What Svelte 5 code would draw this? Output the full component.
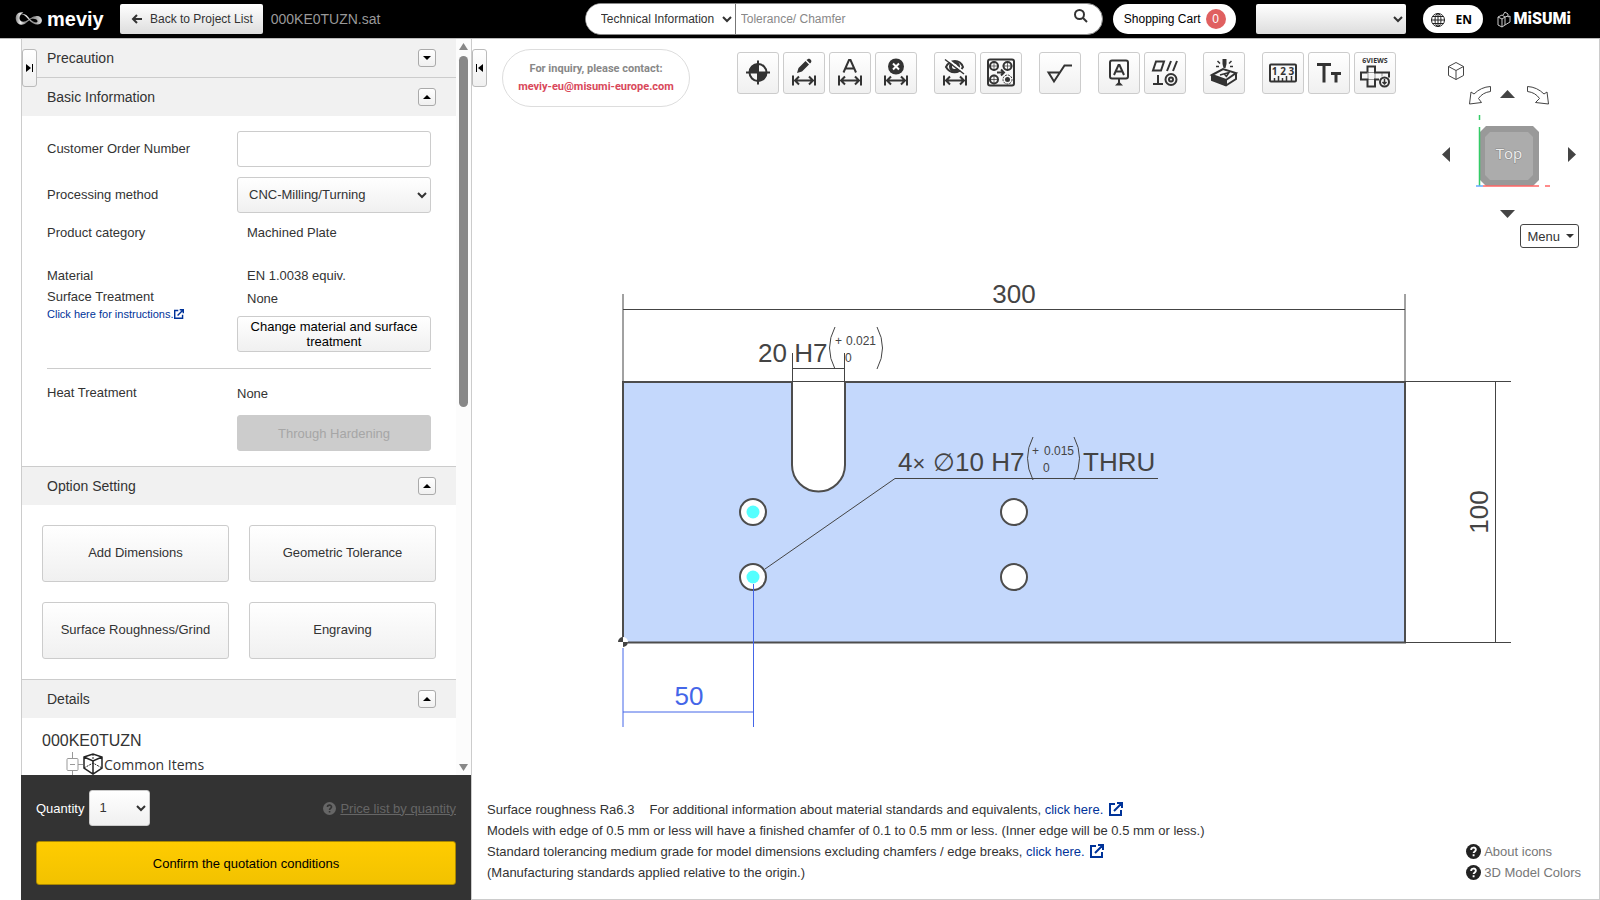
<script lang="ts">
  type Tool = { label: string; body: string };

  const dimArrow =
    '<path d="M10 23.5v10M32 23.5v10M12 28.5h18M16 24.5l-4 4 4 4M26 24.5l4 4-4 4" />';

  const toolGroups: Tool[][] = [
    [
      {
        label: 'Set origin',
        body: '<circle cx="21" cy="20.5" r="8.5"/><path d="M21 8.5v24M9 20.5h24"/><path class="fill" d="M21 20.5v-9a9 9 0 0 0-9 9zM21 20.5v9a9 9 0 0 0 9-9z"/>'
      },
      {
        label: 'Edit dimension',
        body: `<path class="fill" d="M14 21l1.5-5 7-7 3.5 3.5-7 7zM23.5 8l1.5-1c1.5-1 4.5 1.5 3 3.5l-1 1z"/>${dimArrow}`
      },
      { label: 'Automatic dimension', body: `<path d="M14.5 20.5L20 8h1.5L27 20.5M16.5 16.5h8.5"/>${dimArrow}` },
      {
        label: 'Delete dimension',
        body: `<circle class="fill" cx="21" cy="14.5" r="8"/><path class="cut" d="M18 11.5l6 6M24 11.5l-6 6"/>${dimArrow}`
      }
    ],
    [
      {
        label: 'Hide dimension',
        body: `<path d="M12 15c4-8 14-8 17 0-4 7-13 7-17 0z"/><circle cx="20.5" cy="14.5" r="4" stroke-width="3"/><path class="cut" d="M12 6l19 15"/><path stroke-width="1.5" d="M11 7.5L30 22"/>${dimArrow}`
      },
      {
        label: 'Group holes',
        body: '<rect x="8" y="7.5" width="26" height="26" rx="2"/><g stroke-width="2"><circle cx="14" cy="14" r="4"/><circle cx="27.5" cy="14" r="4"/><circle cx="14" cy="27.5" r="4"/></g><path stroke-width="0.7" d="M14 9v10M9 14h10M27.5 9v10M22.5 14h10M14 22.5v10M9 27.5h10"/><circle cx="27.5" cy="27.5" r="4.5" stroke-width="1" stroke-dasharray="2 1"/><circle class="fill" cx="27.5" cy="27.5" r="2.5"/><path d="M17 20.5h7M21 17.5l3 3-3 3"/>'
      }
    ],
    [{ label: 'Surface roughness', body: '<path d="M20.5 20.5H9.5L15 29.5 25.5 13.5H33"/>' }],
    [
      {
        label: 'Datum',
        body: '<rect x="12" y="8.5" width="18" height="18" rx="2"/><path d="M16 23l4.5-10h1L26 23M17.5 19.5h7M21 27v5"/><path class="fill" d="M17 33.5l4-4 4 4z"/>'
      },
      {
        label: 'Geometric tolerance',
        body: '<path d="M12 9.5h8l-3 9H9zM27 9l-4 10M33 9l-4 10M14 23v9M9 32h10"/><circle cx="27" cy="27.5" r="5.5"/><circle cx="27" cy="27.5" r="2"/>'
      }
    ],
    [
      {
        label: 'Engraving',
        body: '<path class="fill" d="M19.5 7h4v5l-1 4h-2l-1-4z"/><path stroke-width="1.5" d="M14.5 9l2.5 2.5M13 14.5h3M28.5 9l-2.5 2.5M30 14.5h-3"/><path d="M9 23l11-6 13 4-10 7zM9 23v5l14 5.5 10-6.500v-6M23 28v5"/><path class="fill" d="M9 23l14 5v6L9 28z"/><path stroke-width="1.5" d="M17 23l9-2.5-3 4.5M21 21.5l2 2.5"/>'
      }
    ],
    [
      {
        label: 'Measure',
        body: '<rect x="8" y="12.5" width="26" height="17" rx="1"/><text x="21" y="23" font-size="10" text-anchor="middle">1 2 3</text><path stroke-width="1.5" d="M12.5 29v-3M16.5 29v-5M20.5 29v-3M24.5 29v-5M29.5 29v-5"/>'
      },
      { label: 'Text size', body: '<path stroke-width="3" d="M9 12.5h14M16 12.5v18M23 21.5h10M28 21.5v9"/>' },
      {
        label: 'Six views',
        body: '<text x="21" y="11" font-size="7" text-anchor="middle">6VIEWS</text><path d="M13.5 20.5v-6h7.5v6h14v5M13.5 20.5H7v7h6.5v7h7.5v-7h4"/><path stroke-width="0.5" d="M14 20.5h7M14 27.5h7M14 20.5v7M21 20.5v7M28 20.5v4"/><circle cx="30.5" cy="30" r="4.5"/><path stroke-width="1.5" d="M30.5 27v5M28.5 30l2 2 2-2"/>'
      }
    ]
  ];

  const options = ['Add Dimensions', 'Geometric Tolerance', 'Surface Roughness/Grind', 'Engraving'];
  const holes = [
    { x: 753, y: 512, marked: true },
    { x: 753, y: 577, marked: true },
    { x: 1014, y: 512, marked: false },
    { x: 1014, y: 577, marked: false }
  ];

  let open = $state({ precaution: false, basic: true, option: true, details: true });
  let orderNumber = $state('');
  let keyword = $state('');
  let quantity = $state('1');
</script>

{#snippet external()}
  <svg class="external" viewBox="0 0 14 14" aria-hidden="true">
    <path d="M6 2H1v11h11V8M8 1h5v5M13 1L5 9" />
  </svg>
{/snippet}

{#snippet question()}
  <svg class="question" viewBox="0 0 16 16" aria-hidden="true">
    <circle cx="8" cy="8" r="8" />
    <path d="M5.5 6.3c0-3.3 5-3.3 5-.2 0 1.8-2.4 1.8-2.4 3.6M8.1 11v2" />
  </svg>
{/snippet}

{#snippet heading(title: string, key: 'precaution' | 'basic' | 'option' | 'details')}
  <div class="section-head">
    <h2>{title}</h2>
    <button class="toggle" aria-label="Toggle {title}" onclick={() => (open[key] = !open[key])}>
      <svg viewBox="0 0 8 4" width="8" height="4">
        <path d={open[key] ? 'M0 4L4 0l4 4z' : 'M0 0l4 4 4-4z'} />
      </svg>
    </button>
  </div>
{/snippet}

<div class="app">
  <header>
    <a class="logo" href="#home">
      <svg viewBox="0 0 30 16" width="28" height="16" aria-hidden="true">
        <defs>
          <linearGradient id="ribbon">
            <stop offset="0" stop-color="#888" />
            <stop offset="0.3" stop-color="#eee" />
            <stop offset="0.6" stop-color="#888" />
            <stop offset="1" stop-color="#ddd" />
          </linearGradient>
        </defs>
        <g fill="url(#ribbon)">
          <path d="M9 1C3 0 0 4 1 9c1 5 7 7 11 3l6-5c-3 1-6 4-9 4-5 0-6-7 0-10z" />
          <path d="M5 3c5-1 7 3 10 6 3 4 9 6 12 4 4-3 1-9-5-8-3 0-5 2-6 3 4-1 9 0 8 3-1 2-5 0-8-3-3-4-6-7-11-5z" />
        </g>
      </svg>
      <span>meviy</span>
    </a>
    <button class="back">
      <svg viewBox="0 0 11 10" width="11" height="10"><path d="M11 5H2M6 1L2 5l4 4" /></svg>
      Back to Project List
    </button>
    <span class="file">000KE0TUZN.sat</span>

    <form class="search" role="search">
      <select aria-label="Search category">
        <option>Technical Information</option>
      </select>
      <input type="text" aria-label="Keyword" placeholder="Tolerance/ Chamfer" bind:value={keyword} />
      <button type="button" aria-label="Search">
        <svg viewBox="0 0 14 14" width="14" height="14"><circle cx="5.5" cy="5.5" r="4.5" /><path d="M9 9l4 4" /></svg>
      </button>
    </form>
    <button class="cart">Shopping Cart <span>0</span></button>
    <select class="account" aria-label="Account"><option></option></select>
    <button class="lang">
      <svg viewBox="0 0 14 14" width="14" height="14">
        <circle cx="7" cy="7" r="6.5" /><ellipse cx="7" cy="7" rx="3" ry="6.5" />
        <path d="M7 0v14M0 7h14M1.5 3.5h11M1.5 10.5h11" />
      </svg>
      EN
    </button>
    <a class="misumi" href="#misumi">
      <svg viewBox="0 0 14 17" width="14" height="17" aria-hidden="true">
        <path d="M1 6l4-2 3 2v8l-3 2-4-2zM1 6l4 2 3-2M5 8v8M6 4l2-3 3 2v3l2-1v6l-5 3M8 6l3-1" />
      </svg>
      <span>MiSUMi</span>
    </a>
  </header>

  <div class="workspace">
    <aside>
      <button class="tab" aria-label="Expand panel">
        <svg viewBox="0 0 8 8" width="8" height="8"><path d="M0 0l5 4-5 4zM6 0h1v8H6z" /></svg>
      </button>

      <div class="scroll-area">
        <div class="sections">
          {@render heading('Precaution', 'precaution')}

          {@render heading('Basic Information', 'basic')}
          {#if open.basic}
            <div class="basic">
              <div class="row">
                <label for="order">Customer Order Number</label>
                <input id="order" type="text" bind:value={orderNumber} />
              </div>
              <div class="row">
                <label for="method">Processing method</label>
                <select id="method"><option>CNC-Milling/Turning</option></select>
              </div>
              <div class="row category">
                <span class="name">Product category</span>
                <span class="indent">Machined Plate</span>
              </div>
              <div class="row block">
                <div class="name">
                  <p>Material</p>
                  <p>Surface Treatment</p>
                  <a href="#instructions">Click here for instructions.{@render external()}</a>
                </div>
                <div class="value">
                  <p class="indent">EN 1.0038 equiv.</p>
                  <p class="indent">None</p>
                  <button class="change">Change material and surface treatment</button>
                </div>
              </div>
              <hr />
              <div class="row heat">
                <div class="name"><p>Heat Treatment</p></div>
                <div class="value">
                  <p>None</p>
                  <button disabled>Through Hardening</button>
                </div>
              </div>
            </div>
          {/if}

          {@render heading('Option Setting', 'option')}
          {#if open.option}
            <div class="options">
              {#each options as option}
                <button>{option}</button>
              {/each}
            </div>
          {/if}

          {@render heading('Details', 'details')}
          {#if open.details}
            <div class="details">
              <p>000KE0TUZN</p>
              <div class="tree-item">
                <svg viewBox="0 0 37 26" width="37" height="26" aria-hidden="true">
                  <g stroke="#999"><path d="M6.5 0v6M6.5 18v8M12 12.5h5M4 12.5h5" /><rect x="1" y="6.5" width="11" height="12" rx="1" /></g>
                  <path stroke="#222" stroke-width="1.5" d="M18 5l9-3 9 3v11l-9 6-9-6zM18 5l9 4 9-4M27 9v13" />
                  <path stroke="#222" stroke-dasharray="2 1" d="M18 16l9-5 9 5M27 2v8" />
                </svg>
                <span>Common Items</span>
              </div>
            </div>
          {/if}
        </div>

        <div class="scrollbar" aria-hidden="true">
          <svg viewBox="0 0 9 7" width="9" height="7"><path d="M4.5 0L9 7H0z" /></svg>
          <div class="track"><div class="thumb"></div></div>
          <svg viewBox="0 0 9 7" width="9" height="7"><path d="M0 0h9L4.5 7z" /></svg>
        </div>
      </div>

      <div class="order">
        <div class="quantity">
          <label for="quantity">Quantity</label>
          <select id="quantity" bind:value={quantity}><option>1</option><option>2</option></select>
          <a href="#prices">{@render question()}<span>Price list by quantity</span></a>
        </div>
        <button class="confirm">Confirm the quotation conditions</button>
      </div>
    </aside>

    <main>
      <svg class="drawing" viewBox="472 39 1127 860" role="img" aria-label="Plate drawing">
        <path class="plate" d="M623 382H1405V642.5H623Z" />
        <path class="slot" d="M792 382V465a26.500 26.500 0 0 0 53 0V382" />
        <g class="thin">
          <path d="M792 381.5h53" />
          <path d="M623 294v88M1405 294v88M623 309.5h782" />
          <path d="M792.5 353v29M844.5 353v29M792 368.5h53" />
          <path d="M1405 381.5h106M1405 642.5h106M1495.5 382v260" />
          <path d="M765 569L895 478.5H1158" />
          <path d="M835 327q-11 21 0 42M877 327q11 21 0 42" />
          <path d="M1033 437q-11 21 0 43M1074 437q11 21 0 43" />
        </g>
        {#each holes as hole}
          <circle class="hole" cx={hole.x} cy={hole.y} r="13" />
          {#if hole.marked}
            <circle class="mark" cx={hole.x} cy={hole.y} r="6.5" />
          {/if}
        {/each}
        <g class="dim">
          <text x="1014" y="303" text-anchor="middle">300</text>
          <text x="758" y="362">20 H7</text>
          <text class="tol" x="835" y="345">+</text>
          <text class="tol" x="846" y="345">0.021</text>
          <text class="tol" x="845" y="362">0</text>
          <text x="898" y="471">4<tspan font-size="22">×</tspan></text>
          <text class="sign" x="933" y="471">∅</text>
          <text x="955" y="471">10 H7</text>
          <text class="tol" x="1032" y="455">+</text>
          <text class="tol" x="1044" y="455">0.015</text>
          <text class="tol" x="1043" y="472">0</text>
          <text x="1083" y="471">THRU</text>
          <text transform="translate(1488 512) rotate(-90)" text-anchor="middle">100</text>
        </g>
        <g class="selected">
          <path d="M623 648v79M753.5 584v143M623 712h130" />
          <text x="689" y="705" text-anchor="middle">50</text>
        </g>
        <circle cx="623" cy="642" r="5" fill="#fff" />
        <path d="M623 642v-5a5 5 0 0 0-5 5zM623 642v5a5 5 0 0 0 5-5z" fill="#444" />
      </svg>

      <button class="tab" aria-label="Collapse panel">
        <svg viewBox="0 0 8 8" width="8" height="8"><path d="M7 0L2 4l5 4zM0 0h1v8H0z" /></svg>
      </button>

      <div class="top">
        <div class="inquiry">
          <span>For inquiry, please contact:</span>
          <a href="mailto:meviy-eu@misumi-europe.com">meviy-eu@misumi-europe.com</a>
        </div>

        <div class="toolbar">
          {#each toolGroups as group}
            <div class="tool-group">
              {#each group as tool}
                <button aria-label={tool.label} title={tool.label}>
                  <svg viewBox="0 0 42 42" width="42" height="42">{@html tool.body}</svg>
                </button>
              {/each}
            </div>
          {/each}
        </div>

        <div class="navigator">
          <svg viewBox="1440 60 140 160" width="140" height="160" role="img" aria-label="View cube">
            <g class="wire">
              <path d="M1448.5 66.5l7.5-4 7.5 4v9l-7.5 4-7.5-4zM1448.5 66.5l7.5 4 7.5-4M1456 70.5v9" />
              <path d="M1490.5 86.5v5q-8 1-12 7l3 4-12 1.5 1.5-12 3 2q7-7 16.500-7.500z" />
              <path d="M1527.5 86.5v5q8 1 12 7l-4 4 13 1.5-1.5-12-3 2q-7-7-16.500-7.500z" />
            </g>
            <path fill="#444" d="M1500 98l7.5-8 7.5 8zM1500 210h15l-7.5 8zM1450 147v15l-8-7.500zM1568 147v15l8-7.500z" />
            <path fill="#999" d="M1486 126h47l6 6v48l-6 6h-47l-6-6v-48z" />
            <path fill="#acacac" d="M1490 132h38l5 5v38l-5 5h-38l-5-5v-38z" />
            <path stroke="#3c6" stroke-width="1.5" d="M1479.5 115v5M1479.5 127v59" />
            <path stroke="#f66" stroke-width="1.5" d="M1483 186h56M1545 186h5" />
            <path stroke="#6af" stroke-width="1.5" d="M1476 186h7" />
            <text x="1509" y="159" text-anchor="middle">Top</text>
          </svg>
          <button class="menu">
            Menu <svg viewBox="0 0 8 4" width="8" height="4"><path d="M0 0h8L4 4z" /></svg>
          </button>
        </div>
      </div>

      <div class="notes">
        <div>
          <p><span class="roughness">Surface roughness Ra6.3</span>For additional information about material standards and equivalents, <a href="#standards">click here. {@render external()}</a></p>
          <p>Models with edge of 0.5 mm or less will have a finished chamfer of 0.1 to 0.5 mm or less. (Inner edge will be 0.5 mm or less.)</p>
          <p>Standard tolerancing medium grade for model dimensions excluding chamfers / edge breaks, <a href="#tolerances">click here. {@render external()}</a></p>
          <p>(Manufacturing standards applied relative to the origin.)</p>
        </div>
        <nav>
          <a href="#icons">{@render question()}About icons</a>
          <a href="#colors">{@render question()}3D Model Colors</a>
        </nav>
      </div>
    </main>
  </div>
</div>

<style>
  :global(body) {
    background: #fff;
  }

  .app {
    display: flex;
    flex-direction: column;
    height: 100vh;
    color: #333;
    font: 13px/21px "Liberation Sans", Arial, sans-serif;
  }

  .app * {
    box-sizing: border-box;
  }

  p,
  h2 {
    margin: 0;
    font-weight: normal;
  }

  a {
    color: #039;
    text-decoration: none;
  }

  button,
  input,
  select {
    margin: 0;
    padding: 0;
    border: 1px solid #ccc;
    border-radius: 3px;
    color: #333;
    font: inherit;
  }

  button,
  select {
    background: linear-gradient(#fff, #f0f0f0);
    cursor: pointer;
  }

  header {
    display: flex;
    align-items: center;
    height: 39px;
    padding: 0 29px 0 15px;
    border-bottom: 1px solid #bbb;
    background: #000;
    font-size: 12px;
  }

  .logo {
    display: flex;
    align-items: center;
    gap: 4px;
    width: 105px;
    color: #fff;
    font-size: 20px;
    font-weight: bold;
  }

  .back {
    display: flex;
    align-items: center;
    gap: 8px;
    height: 30px;
    padding: 0 10px 0 11px;
    border: 0;
    border-radius: 2px;
    background: linear-gradient(#fff, #ddd);
  }

  .back svg,
  .search svg {
    fill: none;
    stroke: #333;
    stroke-width: 2;
  }

  .file {
    margin-left: 8px;
    color: #999;
    font-size: 14px;
  }

  .search {
    display: flex;
    width: 518px;
    height: 32px;
    margin-left: auto;
    border: 1px solid #888;
    border-radius: 16px;
    background: #fff;
    overflow: hidden;
  }

  .search select {
    width: 150px;
    padding-left: 11px;
    border: 0;
    border-right: 1px solid #777;
    border-radius: 0;
    background: #fff;
  }

  .search input {
    flex: 1;
    padding: 0 5px;
    border: 0;
    background: #fff;
    outline: 0;
  }

  .search input::placeholder {
    color: #888;
  }

  .search button {
    width: 40px;
    padding-right: 2px;
    border: 0;
    background: none;
  }

  .cart,
  .lang {
    display: flex;
    align-items: center;
    border: 0;
    border-radius: 16px;
    background: #fff;
    color: #000;
  }

  .cart {
    gap: 5px;
    height: 30px;
    margin-left: 10px;
    padding: 0 10px 0 11px;
  }

  .cart span {
    width: 20px;
    border-radius: 50%;
    background: #e06060;
    color: #fff;
    line-height: 20px;
  }

  .account {
    width: 150px;
    height: 30px;
    margin-left: 20px;
    border: 0;
    border-radius: 2px;
    background: linear-gradient(#fff, #ddd);
  }

  .lang {
    gap: 11px;
    width: 60px;
    height: 28px;
    margin: 0 14px 0 17px;
    padding: 2px 8px 0;
    font: bold 12px/20px "Open Sans", sans-serif;
  }

  .lang svg {
    fill: none;
    stroke: #222;
    stroke-width: 1;
  }

  .misumi {
    display: flex;
    align-items: center;
    gap: 3px;
    color: #fff;
    font: 900 16px/20px Roboto, "Liberation Sans", sans-serif;
  }

  .misumi svg {
    fill: none;
    stroke: #ccc;
    stroke-width: 1;
  }

  .workspace {
    display: flex;
    flex: 1;
    min-height: 0;
    padding-left: 21px;
  }

  aside {
    position: relative;
    display: flex;
    flex-direction: column;
    flex: none;
    width: 451px;
    border: solid #ccc;
    border-width: 0 1px;
  }

  .tab {
    position: absolute;
    top: 10px;
    left: 0;
    display: flex;
    align-items: center;
    justify-content: center;
    width: 15px;
    height: 38px;
    border-color: #bbb;
  }

  .scroll-area {
    display: flex;
    flex: 1;
    min-height: 0;
  }

  .sections {
    flex: 1;
    overflow: hidden;
  }

  .section-head {
    display: flex;
    align-items: center;
    justify-content: space-between;
    height: 39px;
    padding: 0 20px 0 25px;
    border-top: 1px solid #ccc;
    background: #f1f1f1;
  }

  .section-head:first-child {
    height: 38px;
    border-top: 0;
  }

  .section-head h2 {
    font-size: 14px;
  }

  .toggle {
    display: flex;
    align-items: center;
    justify-content: center;
    width: 18px;
    height: 18px;
    border-color: #aaa;
  }

  .basic {
    display: flex;
    flex-direction: column;
    gap: 10px;
    padding: 15px 25px;
  }

  .row {
    display: flex;
    align-items: center;
    line-height: 18px;
  }

  .row label,
  .row .name {
    width: 190px;
  }

  .row input,
  .row select,
  .value button {
    width: 194px;
    height: 36px;
  }

  .row input {
    padding: 0 8px;
  }

  .row select {
    padding: 0 4px 2px 7px;
  }

  .row .indent {
    padding-left: 10px;
  }

  .category {
    line-height: 20px;
  }

  .block,
  .heat {
    align-items: flex-start;
  }

  .block {
    margin-top: 11px;
  }

  .name p {
    line-height: 21px;
  }

  .block .name {
    padding-top: 1px;
  }

  .name a {
    display: flex;
    align-items: center;
    font-size: 11px;
    line-height: 14px;
  }

  .value p {
    line-height: 23px;
  }

  .value button {
    display: block;
    margin-top: 6px;
    line-height: 15px;
  }

  .value .change {
    color: #000;
  }

  .value button:disabled {
    margin-top: 10px;
    background: #ccc;
    color: #a6a6a6;
  }

  hr {
    width: 100%;
    height: 1px;
    margin: 6px 0 3px;
    border: 0;
    background: #ccc;
  }

  .options {
    display: grid;
    grid-template-columns: 1fr 1fr;
    grid-auto-rows: 57px;
    gap: 20px;
    padding: 20px;
  }

  .options button {
    padding-bottom: 2px;
  }

  .details {
    padding: 12px 20px;
  }

  .details p {
    font-size: 16px;
    line-height: 22px;
  }

  .tree-item {
    display: flex;
    align-items: center;
    padding-left: 24px;
    font: 14px/20px "Open Sans", sans-serif;
  }

  .tree-item svg {
    margin-right: 1px;
    fill: none;
  }

  .scrollbar {
    display: flex;
    flex-direction: column;
    align-items: center;
    width: 15px;
    padding: 4px 0;
    background: #fcfcfc;
    fill: #888;
  }

  .track {
    flex: 1;
    width: 9px;
    padding: 6px 0;
  }

  .thumb {
    height: 50%;
    border-radius: 5px;
    background: #888;
  }

  .order {
    display: flex;
    flex-direction: column;
    gap: 15px;
    margin-left: -1px;
    padding: 15px;
    background: #333;
    color: #fff;
  }

  .quantity {
    display: flex;
    align-items: center;
    gap: 5px;
  }

  .quantity select {
    width: 61px;
    height: 36px;
    padding: 0 4px 2px 5px;
  }

  .quantity a {
    display: flex;
    align-items: center;
    gap: 4px;
    margin-left: auto;
    color: #666;
  }

  .quantity a span {
    text-decoration: underline;
  }

  .confirm {
    height: 44px;
    border-color: #a80;
    background: linear-gradient(#fc0, #f2c200);
    color: #000;
  }

  .external {
    width: 10px;
    height: 10px;
    fill: none;
    stroke: #039;
    stroke-width: 2;
  }

  .question {
    width: 15px;
    height: 15px;
    fill: #222;
  }

  .question path {
    fill: none;
    stroke: #fff;
    stroke-width: 2;
  }

  .quantity .question {
    width: 13px;
    height: 13px;
    fill: #666;
  }

  .quantity .question path {
    stroke: #333;
  }

  main {
    position: relative;
    display: flex;
    flex: 1;
    flex-direction: column;
    justify-content: space-between;
    min-width: 0;
    border: solid #ccc;
    border-width: 0 1px 1px 0;
  }

  .drawing {
    position: absolute;
    inset: 0;
    width: 100%;
    height: 100%;
  }

  .plate {
    fill: #c4d8fc;
    stroke: #4d4d4d;
    stroke-width: 2;
  }

  .slot,
  .hole {
    fill: #fff;
    stroke: #4d4d4d;
    stroke-width: 2;
  }

  .mark {
    fill: #5ff;
  }

  .thin {
    fill: none;
    stroke: #444;
  }

  .dim,
  .selected {
    fill: #444;
    font-size: 26px;
  }

  .dim .tol {
    font-size: 12px;
  }

  .dim .sign {
    font-family: "DejaVu Sans", sans-serif;
    font-size: 25px;
  }

  .selected {
    fill: #4466e8;
  }

  .selected path {
    stroke: #4466e8;
  }

  .top {
    position: relative;
    display: flex;
    align-items: flex-start;
    padding: 10px 19px 0 30px;
  }

  .inquiry {
    display: flex;
    flex-direction: column;
    align-items: center;
    width: 188px;
    height: 58px;
    padding-top: 10px;
    border: 1px solid #ddd;
    border-radius: 29px;
    background: #fff;
    color: #888;
    font: bold 11px/18px Roboto, "Liberation Sans", sans-serif;
  }

  .inquiry a {
    color: #d9485a;
  }

  .toolbar {
    display: flex;
    gap: 17px;
    margin: 3px auto 0 47px;
  }

  .tool-group {
    display: flex;
    gap: 4px;
  }

  .tool-group button {
    width: 42px;
    height: 42px;
  }

  .tool-group svg {
    display: block;
    margin: -1px;
    fill: none;
    stroke: #333;
    stroke-width: 2;
  }

  .tool-group :global(.fill) {
    fill: #333;
    stroke: none;
  }

  .tool-group :global(.cut) {
    stroke: #fff;
  }

  .tool-group :global(text) {
    fill: #333;
    stroke: none;
    font-family: "Open Sans", sans-serif;
    font-weight: bold;
  }

  .navigator {
    display: flex;
    flex-direction: column;
    align-items: flex-end;
    gap: 4px;
    padding-top: 11px;
  }

  .navigator .wire {
    fill: none;
    stroke: #444;
  }

  .navigator text {
    fill: #eee;
    stroke: #888;
    paint-order: stroke;
    font: 15px "Open Sans", sans-serif;
  }

  .menu {
    display: flex;
    align-items: center;
    gap: 6px;
    height: 24px;
    margin-right: 1px;
    padding: 0 4px 0 6px;
    border-color: #444;
    background: #fff;
  }

  .menu svg {
    fill: #333;
  }

  .notes {
    position: relative;
    display: flex;
    align-items: flex-end;
    justify-content: space-between;
    padding: 0 18px 16px 15px;
  }

  .notes .external {
    width: 14px;
    height: 14px;
    margin-left: 2px;
    vertical-align: -2px;
  }

  .roughness {
    margin-right: 15px;
  }

  nav a {
    display: flex;
    align-items: center;
    gap: 3px;
    color: #777;
  }
</style>
